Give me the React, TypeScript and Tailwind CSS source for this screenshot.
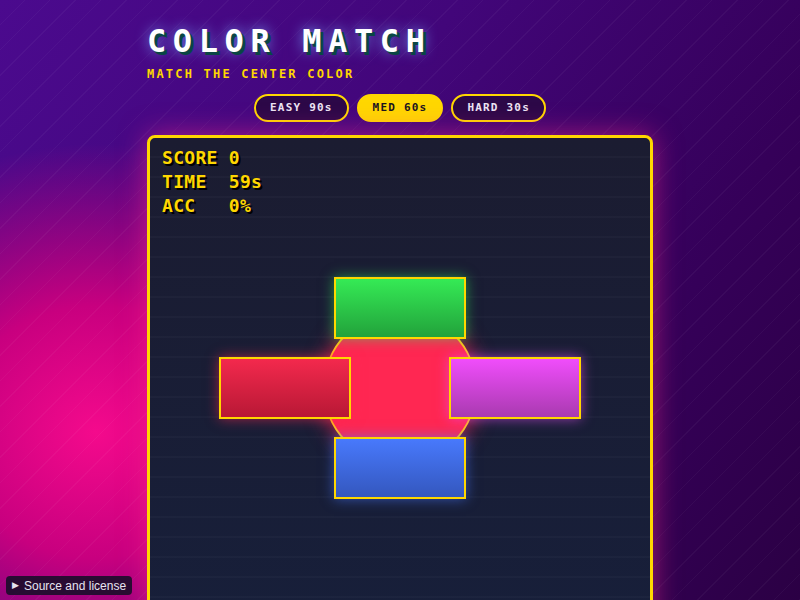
import { useState } from 'react';

const MODES = [
  { id: 'easy', label: 'EASY 90s' },
  { id: 'med', label: 'MED 60s' },
  { id: 'hard', label: 'HARD 30s' },
];

const mono = "font-['DejaVu_Sans_Mono','Liberation_Mono',monospace]";

export default function App() {
  const [mode, setMode] = useState('med');

  return (
    <div className="relative h-[600px] w-full overflow-hidden bg-[repeating-linear-gradient(135deg,transparent_0_17px,rgba(255,255,255,0.035)_17px_18px),radial-gradient(ellipse_50%_60%_at_12%_72%,#f40a8c_0%,#c8007f_35%,rgba(150,0,128,0)_80%),linear-gradient(120deg,#4b0a8e_0%,#42067a_40%,#350059_75%,#2b0044_100%)]">
      <div className="mx-auto w-[506px] pt-[25px]">
        <h1
          className={`${mono} text-[32px] leading-none font-bold tracking-[6.6px] text-white [text-shadow:3px_3px_0_#0a4644,0_0_14px_rgba(120,170,255,0.9)]`}
        >
          COLOR MATCH
        </h1>
        <p className={`${mono} mt-[11px] text-[12px] leading-none font-bold tracking-[2.2px] text-[#ffd700]`}>
          MATCH THE CENTER COLOR
        </p>

        <div className="mt-[14px] flex justify-center gap-2">
          {MODES.map((m) => (
            <button
              key={m.id}
              onClick={() => setMode(m.id)}
              className={`${mono} flex h-7 items-center rounded-full border-2 border-[#ffd700] px-[14px] text-[11px] font-bold tracking-[1.2px] ${
                mode === m.id ? 'bg-[#ffd700] text-[#1a1420]' : 'bg-[#2c0848] text-[#ece4f4]'
              }`}
            >
              {m.label}
            </button>
          ))}
        </div>

        <div className="relative mt-[13px] flex h-[506px] w-[506px] items-center justify-center rounded-lg border-[3px] border-[#ffd700] bg-[repeating-linear-gradient(180deg,transparent_0_18px,rgba(255,255,255,0.025)_18px_20px),linear-gradient(180deg,#1b1c31_0%,#171f3a_100%)] shadow-[0_0_28px_rgba(255,40,140,0.55)]">
          <div
            className={`${mono} absolute top-[8px] left-[12px] text-[18px] leading-[24px] font-bold tracking-[0.3px] whitespace-pre text-[#ffd700] [text-shadow:2px_2px_0_#000]`}
          >
            <div>SCORE 0</div>
            <div>TIME  59s</div>
            <div>ACC   0%</div>
          </div>

          <div className="grid grid-cols-[132px_98px_132px] grid-rows-[62px_98px_62px]">
            <div className="col-span-3 col-start-1 row-span-3 row-start-1 h-[154px] w-[154px] place-self-center rounded-full border-2 border-[#ffc21a] bg-[#ff2752] shadow-[0_0_22px_rgba(255,39,82,0.75)]" />
            <div className="relative z-10 col-start-2 row-start-1 h-[62px] w-[132px] justify-self-center border-2 border-[#ffd700] bg-[linear-gradient(180deg,#35ea55,#22a23b)] shadow-[0_0_12px_rgba(50,230,90,0.55)]" />
            <div className="relative z-10 col-start-1 row-start-2 h-[62px] w-[132px] self-center border-2 border-[#ffd700] bg-[linear-gradient(180deg,#f3294d,#b81835)] shadow-[0_0_12px_rgba(255,40,80,0.6)]" />
            <div className="relative z-10 col-start-3 row-start-2 h-[62px] w-[132px] self-center border-2 border-[#ffd700] bg-[linear-gradient(180deg,#f04dfb,#a93ab0)] shadow-[0_0_12px_rgba(235,80,250,0.6)]" />
            <div className="relative z-10 col-start-2 row-start-3 h-[62px] w-[132px] justify-self-center border-2 border-[#ffd700] bg-[linear-gradient(180deg,#4879fc,#3457be)] shadow-[0_0_12px_rgba(70,120,255,0.6)]" />
          </div>
        </div>
      </div>

      <div className="absolute bottom-[5px] left-[6px] flex h-[19px] items-center gap-[5px] rounded-[4px] bg-[rgba(22,14,40,0.88)] px-[6px] font-['Liberation_Sans',Arial,sans-serif] text-[12px] text-[#e6e4f0]">
        <span className="text-[9px]">▶</span>
        <span>Source and license</span>
      </div>
    </div>
  );
}
